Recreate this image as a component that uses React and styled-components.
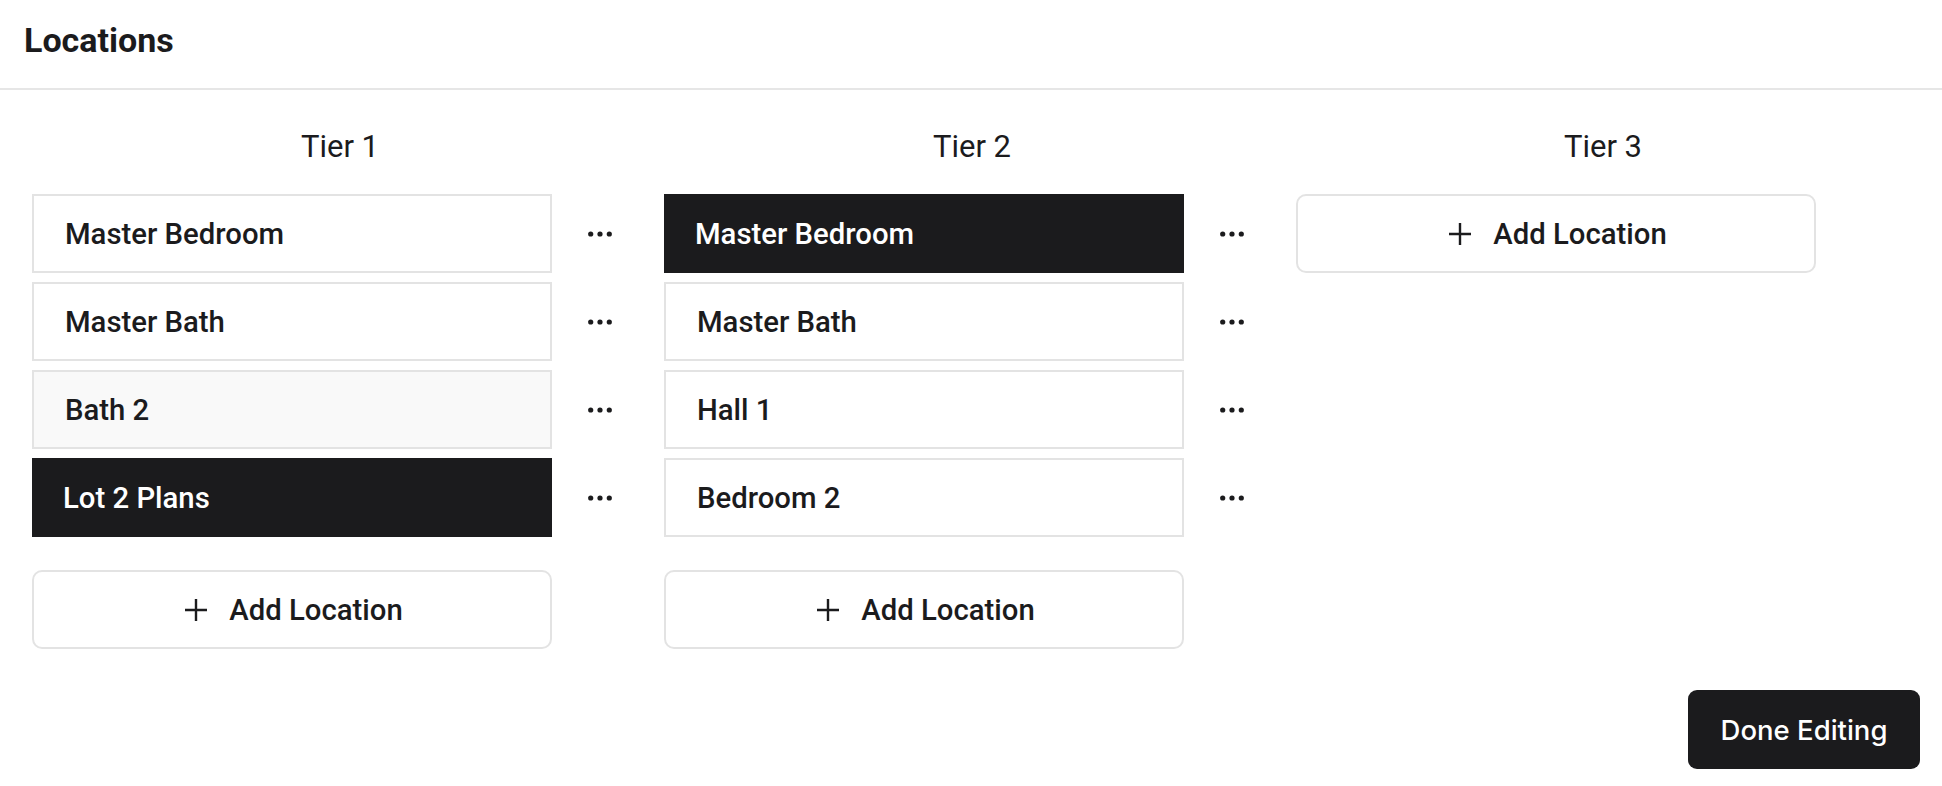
import React from "react";
import styled, { createGlobalStyle } from "styled-components";

const Global = createGlobalStyle`
  html, body { margin: 0; padding: 0; background: #ffffff; }
  body { font-family: Roboto, "Liberation Sans", sans-serif; color: #1b1b1d; }
  * { box-sizing: border-box; }
`;

const Page = styled.div`
  width: 1942px;
  min-height: 786px;
  background: #fff;
  display: flex;
  flex-direction: column;
`;

const Header = styled.header`
  height: 90px;
  padding: 20px 24px 0;
  border-bottom: 2px solid #e6e6e6;
`;

const Title = styled.h1`
  margin: 0;
  font-family: Roboto, "Liberation Sans", sans-serif;
  font-size: 34px;
  line-height: 40px;
  font-weight: 700;
  color: #1b1b1d;
`;

const Board = styled.main`
  display: flex;
  align-items: flex-start;
  gap: 16px;
  padding: 39px 32px 0;
`;

const Column = styled.section`
  width: 616px;
  display: flex;
  flex-direction: column;
`;

const TierTitle = styled.h2`
  margin: 0 0 29px;
  text-align: center;
  font-family: Roboto, "Liberation Sans", sans-serif;
  font-size: 31px;
  line-height: 36px;
  font-weight: 400;
  color: #1b1b1d;
`;

const List = styled.div`
  display: flex;
  flex-direction: column;
  gap: 9px;
  margin-bottom: 33px;
`;

const Row = styled.div`
  display: grid;
  grid-template-columns: 520px 96px;
  align-items: center;
`;

const Item = styled.div`
  height: 79px;
  display: flex;
  align-items: center;
  padding-left: 31px;
  font-size: 29.3px;
  font-weight: 500;
  background: ${(p) => (p.$selected ? "#1b1b1d" : p.$hover ? "#f9f9f9" : "#ffffff")};
  color: ${(p) => (p.$selected ? "#ffffff" : "#1b1b1d")};
  border: ${(p) => (p.$selected ? "none" : "2px solid #e3e3e3")};
`;

const MoreButton = styled.button`
  justify-self: center;
  background: none;
  border: none;
  padding: 0;
  width: 24px;
  height: 24px;
  display: flex;
  align-items: center;
  justify-content: center;
  cursor: pointer;
`;

const AddButton = styled.button`
  width: 520px;
  height: 79px;
  display: flex;
  align-items: center;
  justify-content: center;
  gap: 22px;
  background: #fff;
  border: 2px solid #e3e3e3;
  border-radius: 10px;
  font-family: Roboto, "Liberation Sans", sans-serif;
  font-size: 29.3px;
  font-weight: 500;
  color: #1b1b1d;
  cursor: pointer;
  padding: 0 0 0 4px;
`;

const Footer = styled.footer`
  display: flex;
  justify-content: flex-end;
  padding: 41px 22px 0;
`;

const DoneButton = styled.button`
  width: 232px;
  height: 79px;
  border: none;
  border-radius: 9px;
  background: #1b1b1d;
  color: #fff;
  font-family: Inter, "Liberation Sans", sans-serif;
  font-size: 27.5px;
  font-weight: 500;
  cursor: pointer;
`;

const Dots = () => (
  <svg width="24" height="6" viewBox="0 0 24 6">
    <circle cx="2.7" cy="3" r="2.6" fill="#1b1b1d" />
    <circle cx="12" cy="3" r="2.6" fill="#1b1b1d" />
    <circle cx="21.3" cy="3" r="2.6" fill="#1b1b1d" />
  </svg>
);

const PlusIcon = () => (
  <svg width="22" height="22" viewBox="0 0 22 22">
    <path d="M11 0v22M0 11h22" stroke="#1b1b1d" strokeWidth="2.4" fill="none" />
  </svg>
);

const tiers = [
  {
    name: "Tier 1",
    items: [
      { label: "Master Bedroom" },
      { label: "Master Bath" },
      { label: "Bath 2", hover: true },
      { label: "Lot 2 Plans", selected: true },
    ],
  },
  {
    name: "Tier 2",
    items: [
      { label: "Master Bedroom", selected: true },
      { label: "Master Bath" },
      { label: "Hall 1" },
      { label: "Bedroom 2" },
    ],
  },
  { name: "Tier 3", items: [] },
];

export default function App() {
  return (
    <Page>
      <Global />
      <Header>
        <Title>Locations</Title>
      </Header>
      <Board>
        {tiers.map((tier) => (
          <Column key={tier.name}>
            <TierTitle>{tier.name}</TierTitle>
            {tier.items.length > 0 && (
              <List>
                {tier.items.map((it) => (
                  <Row key={it.label}>
                    <Item $selected={it.selected} $hover={it.hover}>
                      {it.label}
                    </Item>
                    <MoreButton aria-label="More">
                      <Dots />
                    </MoreButton>
                  </Row>
                ))}
              </List>
            )}
            <AddButton>
              <PlusIcon />
              Add Location
            </AddButton>
          </Column>
        ))}
      </Board>
      <Footer>
        <DoneButton>Done Editing</DoneButton>
      </Footer>
    </Page>
  );
}
